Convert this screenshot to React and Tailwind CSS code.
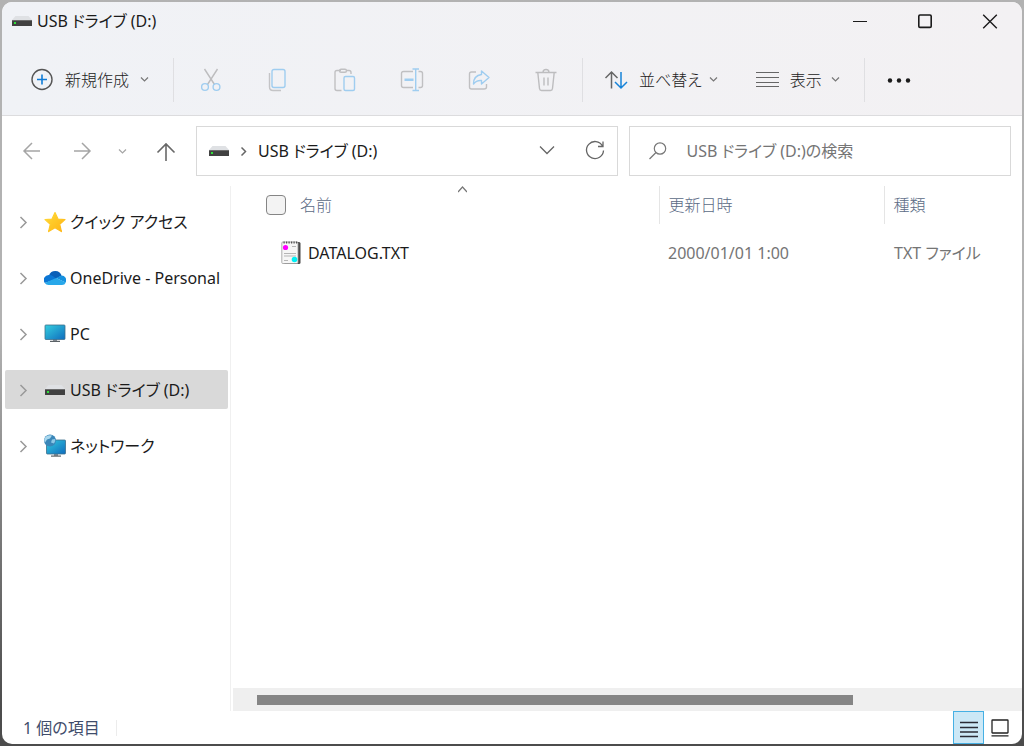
import React, { useState } from 'react';

function Chevron({ className, d = 'M1 1.5 L4.5 5 L8 1.5' }) {
  return (
    <svg className={className} width="9" height="7" viewBox="0 0 9 7" fill="none" stroke="currentColor" strokeWidth="1.200">
      <path d={d} />
    </svg>
  );
}

function DriveIcon() {
  return (
    <svg className="shrink-0" width="22" height="22" viewBox="0 0 22 22">
      <path d="M4.500 6 H17.500 L21 10 H1 Z" fill="#dfe1e4" />
      <rect x="1" y="10" width="20" height="6" rx="0.600" fill="#414141" />
      <rect x="1" y="10" width="20" height="1" fill="#6b6b6b" />
      <rect x="3" y="12" width="2" height="2" fill="#2fe03a" />
    </svg>
  );
}

function StarIcon() {
  return (
    <svg className="shrink-0" width="22" height="22" viewBox="0 0 22 22">
      <defs>
        <linearGradient id="star" x1="0" y1="0" x2="1" y2="1">
          <stop offset="0" stopColor="#ffdb3a" />
          <stop offset="1" stopColor="#ffb311" />
        </linearGradient>
      </defs>
      <path
        d="M11 1.500 L14 8 L21 8.600 L15.700 13.200 L17.400 20.600 L11 16.800 L4.600 20.600 L6.300 13.200 L1 8.600 L8 8 Z"
        fill="url(#star)"
        stroke="url(#star)"
        strokeWidth="1.200"
        strokeLinejoin="round"
      />
    </svg>
  );
}

function CloudIcon() {
  return (
    <svg className="shrink-0" width="22" height="22" viewBox="0 0 22 22">
      <path d="M5 8.200 A6.700 6.700 0 0 1 17.600 8.600 L11 12.500 Z" fill="#0a5fb8" />
      <path d="M5.200 7.900 A5 5 0 0 0 0.800 15.900 L12.500 12 L8.800 8.900 A6 6 0 0 0 5.200 7.900 Z" fill="#0b76d4" />
      <path d="M12.200 11 L17.400 8.500 A4.600 4.600 0 0 1 21.500 15.500 Z" fill="#1490df" />
      <path d="M0.800 15.900 L12.200 11 L21.800 15.400 A4.200 4.200 0 0 1 18 18 H4.500 A4.500 4.500 0 0 1 0.800 15.900 Z" fill="#28a8ea" />
    </svg>
  );
}

function PcIcon() {
  return (
    <svg className="shrink-0" width="22" height="22" viewBox="0 0 22 22">
      <defs>
        <linearGradient id="screen" x1="0" y1="0" x2="1" y2="1">
          <stop offset="0" stopColor="#35cfe0" />
          <stop offset="1" stopColor="#0f6cbd" />
        </linearGradient>
      </defs>
      <rect x="9" y="16" width="4" height="3" fill="#8b9299" />
      <rect x="6" y="17.800" width="10" height="1.200" fill="#5b6166" />
      <rect x="1" y="2" width="20" height="14.500" rx="0.800" fill="url(#screen)" stroke="#3d6f8c" strokeWidth="0.800" />
    </svg>
  );
}

function NetworkIcon() {
  return (
    <svg className="shrink-0" width="22" height="24" viewBox="0 0 22 24">
      <defs>
        <linearGradient id="netScreen" x1="0" y1="0" x2="1" y2="1">
          <stop offset="0" stopColor="#34cbdf" />
          <stop offset="1" stopColor="#0f6cbd" />
        </linearGradient>
      </defs>
      <rect x="10" y="19" width="4" height="3" fill="#8b9299" />
      <rect x="7" y="21.500" width="10" height="1.200" fill="#5b6166" />
      <rect x="2.500" y="6" width="19" height="14" rx="0.800" fill="url(#netScreen)" stroke="#3d6f8c" strokeWidth="0.800" />
      <circle cx="6" cy="6.500" r="6" fill="#3a86b8" />
      <path d="M2 2.500 Q5 0.500 8 1.500 L6 4.500 L3 5.500 L1 8.500 Q-1 5.500 2 2.500 Z" fill="#a9d8ee" />
      <path d="M8 5.500 L11 5 Q12 7.500 10 9.500 L7 8.500 Z" fill="#8cc8e6" />
    </svg>
  );
}

function TextFileIcon() {
  return (
    <svg className="shrink-0" width="20" height="24" viewBox="0 0 20 24">
      <rect x="3" y="1" width="16.500" height="22" rx="1.500" fill="#4a4a4a" />
      <rect x="0.800" y="1" width="16.200" height="21.500" rx="1" fill="#f6f6f6" stroke="#9a9a9a" strokeWidth="0.800" />
      <path d="M2.500 1.500 H17" stroke="#555" strokeWidth="2" strokeDasharray="1.200 1.300" />
      <path d="M11 5.500 H15 M3 12.500 H15 M3 15 H15 M3 19.500 H7" stroke="#b5b5b5" strokeWidth="1" />
      <circle cx="4.500" cy="6.500" r="2.600" fill="#ff00ff" />
      <circle cx="13.500" cy="18.500" r="2.800" fill="#00f0f5" />
    </svg>
  );
}

const svgProps = { width: 24, height: 24, viewBox: '0 0 24 24', fill: 'none', strokeWidth: 1.4 };

const fileActions = [
  {
    label: '切り取り',
    icon: (
      <svg {...svgProps}>
        <path d="M5.500 1 L15.500 16.500 M18.500 1 L8.500 16.500" stroke="#bdbdbf" />
        <circle cx="6" cy="19" r="3.400" stroke="#9fcdf0" />
        <circle cx="17.500" cy="19" r="3.400" stroke="#9fcdf0" />
      </svg>
    ),
  },
  {
    label: 'コピー',
    icon: (
      <svg {...svgProps}>
        <path d="M3.500 5 V19 Q3.500 22.500 7 22.500 H15" stroke="#c4c4c6" />
        <rect x="6" y="1.500" width="13" height="18" rx="2" stroke="#9fcdf0" />
      </svg>
    ),
  },
  {
    label: '貼り付け',
    icon: (
      <svg {...svgProps}>
        <path d="M8 2.500 H4 Q2 2.500 2 4.500 V20.500 Q2 22.500 4 22.500 H8.500 M14 2.500 H16 Q18 2.500 18 4.500 V6" stroke="#c0c0c2" />
        <rect x="6.500" y="1.200" width="7" height="3" rx="1.500" stroke="#c0c0c2" />
        <rect x="11" y="8.500" width="10.500" height="14" rx="1.500" stroke="#9fcdf0" />
      </svg>
    ),
  },
  {
    label: '名前の変更',
    icon: (
      <svg {...svgProps}>
        <path d="M13 3.500 H3.500 Q1.500 3.500 1.500 5.500 V17.500 Q1.500 19.500 3.500 19.500 H13 M18.500 3.500 H20.500 Q22.500 3.500 22.500 5.500 V17.500 Q22.500 19.500 20.500 19.500 H18.500" stroke="#c0c0c2" />
        <path d="M12.500 1 H19 M12.500 22.500 H19 M15.700 1 V22.500" stroke="#9fcdf0" />
        <path d="M4.500 11.800 H13.500" stroke="#9fcdf0" strokeWidth="2.400" />
      </svg>
    ),
  },
  {
    label: '共有',
    icon: (
      <svg {...svgProps}>
        <path d="M9 4 H4.500 Q2.500 4 2.500 6 V19 Q2.500 21 4.500 21 H17 Q19.500 21 19.500 19 V16" stroke="#c0c0c2" />
        <path d="M14.500 3 L22 9.500 L14.500 16 V12.500 Q9.500 12 6.500 16 Q6.500 7.500 14.500 6.500 Z" stroke="#9fcdf0" strokeLinejoin="round" />
      </svg>
    ),
  },
  {
    label: '削除',
    icon: (
      <svg {...svgProps}>
        <path d="M1.500 4.500 H22.500 M9 4.500 Q9 1.500 12 1.500 Q15 1.500 15 4.500 M3.800 4.500 L5.500 20.500 Q5.700 22.500 7.500 22.500 H16.500 Q18.300 22.500 18.500 20.500 L20.200 4.500 M10 9.500 V17.500 M14 9.500 V17.500" stroke="#bdbdbf" />
      </svg>
    ),
  },
];

const places = [
  { name: 'クイック アクセス', icon: <StarIcon /> },
  { name: 'OneDrive - Personal', icon: <CloudIcon /> },
  { name: 'PC', icon: <PcIcon /> },
  { name: 'USB ドライブ (D:)', icon: <DriveIcon /> },
  { name: 'ネットワーク', icon: <NetworkIcon /> },
];

const files = [{ name: 'DATALOG.TXT', date: '2000/01/01 1:00', type: 'TXT ファイル' }];

function Divider() {
  return <div className="w-px h-11 bg-[#dfdfe2] shrink-0" />;
}

function TitleBar() {
  return (
    <header className="flex items-center justify-between h-[38px] pl-[9px]">
      <div className="flex items-center gap-1">
        <DriveIcon />
        <h1>USB ドライブ (D:)</h1>
      </div>
      <div className="flex text-[#1b1b1b]">
        <button aria-label="最小化" className="w-[65px] h-9 flex items-center justify-center">
          <svg width="16" height="16" viewBox="0 0 16 16" stroke="currentColor"><path d="M1 8.500 H15" /></svg>
        </button>
        <button aria-label="最大化" className="w-[65px] h-9 flex items-center justify-center">
          <svg width="16" height="16" viewBox="0 0 16 16" fill="none" stroke="currentColor" strokeWidth="1.600"><rect x="1.800" y="2" width="12.400" height="12.400" rx="1.200" /></svg>
        </button>
        <button aria-label="閉じる" className="w-[65px] h-9 flex items-center justify-center">
          <svg width="16" height="16" viewBox="0 0 16 16" stroke="currentColor" strokeWidth="1.400"><path d="M1.200 1.700 L14.800 15.300 M14.800 1.700 L1.200 15.300" /></svg>
        </button>
      </div>
    </header>
  );
}

function Toolbar() {
  return (
    <div className="flex items-center h-[75px] pl-7 pt-1 font-light text-[#222]">
      <button className="flex items-center gap-[11px] mr-6">
        <svg width="24" height="24" viewBox="0 0 24 24" fill="none" strokeWidth="1.400">
          <circle cx="12" cy="11.500" r="10" stroke="#555" />
          <path d="M12 6.500 V16.500 M7 11.500 H17" stroke="#0f7bd6" strokeWidth="1.600" />
        </svg>
        <span className="flex items-center gap-[11px]">新規作成<Chevron className="text-[#777]" /></span>
      </button>
      <Divider />
      <div className="flex px-[3px]">
        {fileActions.map((action) => (
          <button key={action.label} aria-label={action.label} className="w-[67px] h-11 flex items-center justify-center">
            {action.icon}
          </button>
        ))}
      </div>
      <Divider />
      <button className="flex items-center gap-[11px] ml-[21px]">
        <svg width="24" height="24" viewBox="0 0 24 24" fill="none" strokeWidth="1.500">
          <path d="M7.500 20.500 V4.500 M1.500 10 L7.500 4 L13.500 10" stroke="#666" />
          <path d="M17 4 V20 M11 14 L17 20 L23 14" stroke="#1683d8" />
        </svg>
        <span className="flex items-center gap-[7px]">並べ替え<Chevron className="text-[#777]" /></span>
      </button>
      <button className="flex items-center gap-[11px] ml-[38px]">
        <svg width="23" height="24" viewBox="0 0 23 24" stroke="#666" strokeWidth="1.200">
          <path d="M0 4.500 H23 M0 9.500 H23 M0 14.500 H23 M0 18.500 H23" />
        </svg>
        <span className="flex items-center gap-[9px]">表示<Chevron className="text-[#777]" /></span>
      </button>
      <div className="ml-6"><Divider /></div>
      <button aria-label="もっと見る" className="ml-5">
        <svg width="28" height="24" viewBox="0 0 28 24" fill="#1b1b1b">
          <circle cx="5" cy="12.500" r="2.200" />
          <circle cx="14" cy="12.500" r="2.200" />
          <circle cx="23" cy="12.500" r="2.200" />
        </svg>
      </button>
    </div>
  );
}

function AddressRow() {
  return (
    <div className="flex items-center gap-[11px] h-[70px] pl-5 pr-[11px]">
      <nav className="flex items-center gap-5 mr-[9px] text-[#a5a5a5]">
        <button aria-label="戻る">
          <svg width="20" height="20" viewBox="0 0 20 20" fill="none" stroke="currentColor" strokeWidth="1.500"><path d="M18 10 H2 M10 2 L2 10 L10 18" /></svg>
        </button>
        <button aria-label="進む" className="ml-[10px]">
          <svg width="20" height="20" viewBox="0 0 20 20" fill="none" stroke="currentColor" strokeWidth="1.500"><path d="M2 10 H18 M10 2 L18 10 L10 18" /></svg>
        </button>
        <button aria-label="最近表示した場所" className="ml-[6px]"><Chevron /></button>
        <button aria-label="上へ" className="ml-[9px] text-[#686868]">
          <svg width="20" height="22" viewBox="0 0 20 22" fill="none" stroke="currentColor" strokeWidth="1.600"><path d="M10 21 V4 M1.500 12.500 L10 4 L18.500 12.500" /></svg>
        </button>
      </nav>
      <div className="flex grow-[399] basis-0 items-center h-[50px] px-[11px] border border-[#d9d9d9]">
        <DriveIcon />
        <svg className="mx-[10px] shrink-0" width="8" height="12" viewBox="0 0 8 12" fill="none" stroke="#666" strokeWidth="1.500"><path d="M1.500 2.500 L5.500 6.500 L1.500 10.500" /></svg>
        <a href="#drive" className="grow">USB ドライブ (D:)</a>
        <button aria-label="以前の場所">
          <svg width="18" height="18" viewBox="0 0 18 18" fill="none" stroke="#666" strokeWidth="1.300"><path d="M2 4.500 L9 11.500 L16 4.500" /></svg>
        </button>
        <button aria-label="最新の情報に更新" className="ml-7">
          <svg width="22" height="22" viewBox="0 0 22 22" fill="none" stroke="#666" strokeWidth="1.300">
            <path d="M18.500 6 A8.500 8.500 0 1 0 19.500 10.500 M19 1.500 V6.500 H14" />
          </svg>
        </button>
      </div>
      <label className="flex grow-[344] basis-0 min-w-0 items-center gap-[18px] h-[50px] px-[18px] border border-[#d9d9d9]">
        <svg className="shrink-0" width="20" height="20" viewBox="0 0 20 20" fill="none" stroke="#777" strokeWidth="1.200">
          <circle cx="12" cy="7.500" r="5.700" />
          <path d="M8 11.500 L1.500 18" />
        </svg>
        <input type="search" aria-label="検索" placeholder="USB ドライブ (D:)の検索" className="grow min-w-0 bg-transparent outline-none placeholder:text-[#757575]" />
      </label>
    </div>
  );
}

function Sidebar({ selected, onSelect }) {
  return (
    <aside className="w-[229px] shrink-0 border-r border-[#f0f0f0] pt-4 pl-[3px] pr-[2px]">
      <ul className="flex flex-col gap-[17px]">
        {places.map((place) => (
          <li key={place.name}>
            <button
              onClick={() => onSelect(place.name)}
              className={
                place.name === selected
                  ? 'flex items-center w-full h-[39px] pl-[14px] rounded-xs bg-[#d9d9d9] whitespace-nowrap'
                  : 'flex items-center w-full h-[39px] pl-[14px] rounded-xs whitespace-nowrap'
              }
            >
              <svg className="mr-4 shrink-0" width="9" height="14" viewBox="0 0 9 14" fill="none" stroke="#999" strokeWidth="1.500"><path d="M1.500 2 L7 7.500 L1.500 13" /></svg>
              {place.icon}
              <span className="ml-1">{place.name}</span>
            </button>
          </li>
        ))}
      </ul>
    </aside>
  );
}

function FileList() {
  return (
    <div className="flex flex-col grow min-w-0">
      <div className="grow pl-[35px]">
        <table className="w-full table-fixed text-left text-[#757575]">
          <thead className="text-[#5b6b85]">
            <tr className="h-[38px]">
              <th className="relative w-[393px] font-light">
                <Chevron className="absolute top-0 left-1/2 -ml-1 text-[#777]" d="M0 6 L4.500 1 L9 6" />
                <label className="flex items-center gap-[14px]">
                  <input type="checkbox" className="appearance-none size-5 rounded border border-[#858585] bg-[#f3f3f3] checked:bg-[#0067c0]" />
                  名前
                </label>
              </th>
              <th className="w-[225px] pl-[9px] font-light border-l border-[#e5e5e5]">更新日時</th>
              <th className="pl-[9px] font-light border-l border-[#e5e5e5]">種類</th>
            </tr>
          </thead>
          <tbody>
            {files.map((file) => (
              <tr key={file.name} className="h-[58px]">
                <td>
                  <div className="flex items-center gap-[7px] pl-[15px] text-[#1b1b1b]">
                    <TextFileIcon />
                    {file.name}
                  </div>
                </td>
                <td className="pl-[9px]">{file.date}</td>
                <td className="pl-[10px]">{file.type}</td>
              </tr>
            ))}
          </tbody>
        </table>
      </div>
      {/* Horizontal scrollbar */}
      <div className="flex items-center h-[23px] ml-[2px] pl-6 pr-5 bg-[#efefef]">
        <div className="w-4/5 h-[10px] bg-[#858585]" />
      </div>
    </div>
  );
}

function StatusBar() {
  return (
    <footer className="flex items-center justify-between h-[33px] pl-[21px] pr-[7px]">
      <p className="pr-4 border-r border-[#ececec] leading-4 text-[#3f4d6b]">1 個の項目</p>
      <div className="flex h-full">
        <button aria-label="詳細" className="flex items-center justify-center w-[31px] border border-[#46b0e4] bg-[#cce8f6]">
          <svg width="18" height="20" viewBox="0 0 18 20" stroke="#2b2b35" strokeWidth="1.300">
            <path d="M0 4.500 H18 M0 9.500 H18 M0 14 H18 M0 18.500 H18" />
          </svg>
        </button>
        <button aria-label="大アイコン" className="flex items-center justify-center w-[31px]">
          <svg width="20" height="20" viewBox="0 0 20 20" fill="none" stroke="#222" strokeWidth="1.300">
            <rect x="2" y="2" width="16" height="13" rx="0.500" />
            <path d="M1.500 17.800 H18.500" />
          </svg>
        </button>
      </div>
    </footer>
  );
}

export default function App() {
  const [selected, setSelected] = useState('USB ドライブ (D:)');

  return (
    <div className="h-screen p-[2px] bg-linear-to-b from-[#b2b2b2] from-45% to-[#4c4c4c] to-95%">
      <div className="flex flex-col h-full rounded-[10px] overflow-hidden bg-white text-[16px] leading-6 text-[#1b1b1b] font-['Noto_Sans','Noto_Sans_CJK_JP',sans-serif] [font-feature-settings:'palt']">
        <div className="bg-linear-to-r from-[#f0f2f6] to-[#f3f1f3] border-b border-[#dcdcde]">
          <TitleBar />
          <Toolbar />
        </div>
        <AddressRow />
        <main className="flex grow min-h-0">
          <Sidebar selected={selected} onSelect={setSelected} />
          <FileList />
        </main>
        <StatusBar />
      </div>
    </div>
  );
}
